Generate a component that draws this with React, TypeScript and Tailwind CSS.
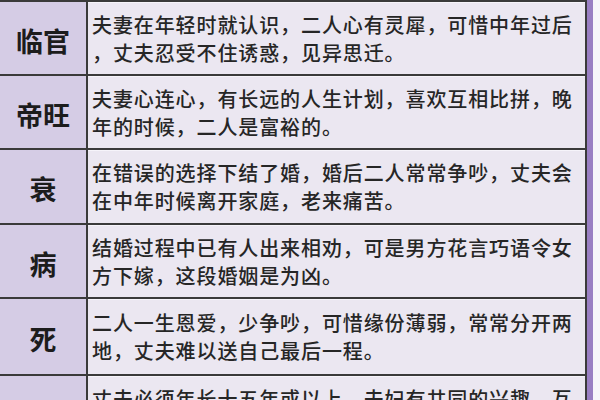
const rows = [
  {
    label: '临官',
    h: 'h-[74px]',
    lines: ['夫妻在年轻时就认识，二人心有灵犀，可惜中年过后', '，丈夫忍受不住诱惑，见异思迁。'],
  },
  {
    label: '帝旺',
    h: 'h-[74px]',
    lines: ['夫妻心连心，有长远的人生计划，喜欢互相比拼，晚', '年的时候，二人是富裕的。'],
  },
  {
    label: '衰',
    h: 'h-[75px]',
    lines: ['在错误的选择下结了婚，婚后二人常常争吵，丈夫会', '在中年时候离开家庭，老来痛苦。'],
  },
  {
    label: '病',
    h: 'h-[74px]',
    lines: ['结婚过程中已有人出来相劝，可是男方花言巧语令女', '方下嫁，这段婚姻是为凶。'],
  },
  {
    label: '死',
    h: 'h-[77px]',
    lines: ['二人一生恩爱，少争吵，可惜缘份薄弱，常常分开两', '地，丈夫难以送自己最后一程。'],
  },
  {
    label: '墓',
    h: 'h-[74px]',
    lines: ['丈夫必须年长十五年或以上，夫妇有共同的兴趣，互', '相扶持，晚年生活安稳。'],
  },
]

export default function App() {
  return (
    <div
      className="w-[600px] h-[400px] overflow-hidden bg-white flex"
      style={{ fontFamily: '"Noto Sans CJK SC", "Noto Sans", sans-serif' }}
    >
      {/* table */}
      <div className="w-[587px] flex-shrink-0 flex flex-col border-r-2 border-[#3a3a3a]">
        {rows.map((r) => (
          <div key={r.label} className={`${r.h} flex-shrink-0 flex border-t-2 border-[#3a3a3a]`}>
            <div className="w-[88px] flex-shrink-0 flex items-center justify-center bg-[#d5cce5] border-r-2 border-[#3a3a3a] pt-1">
              <span className="text-[27px] leading-none font-bold text-[#1c1c1c]">{r.label}</span>
            </div>
            <div className="flex-1 flex flex-col justify-center bg-[#ebe7f1] pl-[4px] border-t border-[#f6f4fa]">
              {r.lines.map((l, i) => (
                <div key={i} className="text-[20px] leading-[28px] tracking-[0.9px] font-medium text-[#262626] whitespace-nowrap">
                  {l}
                </div>
              ))}
            </div>
          </div>
        ))}
      </div>
      {/* purple frame edge */}
      <div className="w-[6px] bg-[#9a7fc3] flex-shrink-0" />
      <div className="flex-1 bg-[#f7f5fa]" />
    </div>
  )
}
